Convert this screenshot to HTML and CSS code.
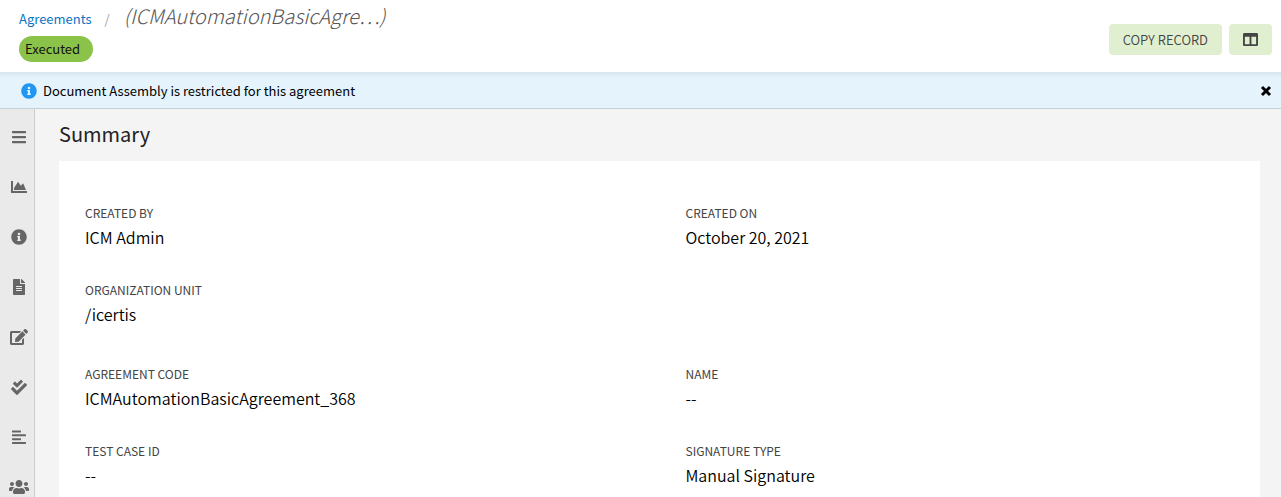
FILE: index.html
```html
<!DOCTYPE html>
<html lang="en">
<head>
    <meta charset="utf-8">
    <title>Agreement Details</title>
    <link rel="stylesheet" href="styles.css">
</head>
<body>
<header class="page-header">
    <div class="header-left">
        <nav class="breadcrumb">
            <a href="#">Agreements</a>
            <span class="separator">/</span>
            <span class="record-name">(ICMAutomationBasicAgre…)</span>
        </nav>
        <span class="status">Executed</span>
    </div>
    <div class="header-actions">
        <button type="button" class="btn">COPY RECORD</button>
        <button type="button" class="btn" aria-label="Columns">
            <svg width="15" height="15" viewBox="0 0 512 512"><path d="M464 32H48C21.500 32 0 53.500 0 80v352c0 26.500 21.500 48 48 48h416c26.500 0 48-21.500 48-48V80c0-26.500-21.500-48-48-48zM224 416H64V160h160v256zm224 0H288V160h160v256z"/></svg>
        </button>
    </div>
</header>

<div class="notice">
    <svg class="notice-icon" width="16" height="16" viewBox="0 0 512 512"><path d="M256 8C119 8 8 119 8 256s111 248 248 248 248-111 248-248S393 8 256 8zm0 110c23 0 42 19 42 42s-19 42-42 42-42-19-42-42 19-42 42-42zm56 254c0 7-5 12-12 12h-88c-7 0-12-5-12-12v-24c0-7 5-12 12-12h12v-64h-12c-7 0-12-5-12-12v-24c0-7 5-12 12-12h64c7 0 12 5 12 12v100h12c7 0 12 5 12 12v24z"/></svg>
    <span class="notice-text">Document Assembly is restricted for this agreement</span>
    <button type="button" class="notice-close" aria-label="Close">
        <svg width="12" height="12" viewBox="0 0 12 12"><path d="M2 2l8 8M10 2l-8 8"/></svg>
    </button>
</div>

<div class="layout">
    <nav class="sidebar">
        <a href="#" aria-label="Menu"><svg width="14" height="16" viewBox="0 0 448 512"><path d="M16 132h416c9 0 16-7 16-16V76c0-9-7-16-16-16H16C7 60 0 67 0 76v40c0 9 7 16 16 16zm0 160h416c9 0 16-7 16-16v-40c0-9-7-16-16-16H16c-9 0-16 7-16 16v40c0 9 7 16 16 16zm0 160h416c9 0 16-7 16-16v-40c0-9-7-16-16-16H16c-9 0-16 7-16 16v40c0 9 7 16 16 16z"/></svg></a>
        <a href="#" aria-label="Summary"><svg width="16" height="16" viewBox="0 0 512 512"><path d="M500 384c7 0 12 5 12 12v40c0 7-5 12-12 12H12c-7 0-12-5-12-12V76c0-7 5-12 12-12h40c7 0 12 5 12 12v308h436zM373 152l-61 61-75-112c-5-8-16-7-20 0L96 288v64h384l-86-197c-4-8-14-10-21-3z"/></svg></a>
        <a href="#" aria-label="Details"><svg width="16" height="16" viewBox="0 0 512 512"><path d="M256 8C119 8 8 119 8 256s111 248 248 248 248-111 248-248S393 8 256 8zm0 110c23 0 42 19 42 42s-19 42-42 42-42-19-42-42 19-42 42-42zm56 254c0 7-5 12-12 12h-88c-7 0-12-5-12-12v-24c0-7 5-12 12-12h12v-64h-12c-7 0-12-5-12-12v-24c0-7 5-12 12-12h64c7 0 12 5 12 12v100h12c7 0 12 5 12 12v24z"/></svg></a>
        <a href="#" aria-label="Document"><svg width="12" height="16" viewBox="0 0 384 512"><path d="M224 136V0H24C11 0 0 11 0 24v464c0 13 11 24 24 24h336c13 0 24-11 24-24V160H248c-13 0-24-11-24-24zm64 236c0 7-5 12-12 12H108c-7 0-12-5-12-12v-8c0-7 5-12 12-12h168c7 0 12 5 12 12v8zm0-64c0 7-5 12-12 12H108c-7 0-12-5-12-12v-8c0-7 5-12 12-12h168c7 0 12 5 12 12v8zm0-72v8c0 7-5 12-12 12H108c-7 0-12-5-12-12v-8c0-7 5-12 12-12h168c7 0 12 5 12 12zm96-114v6H256V0h6c6 0 12 3 17 7l98 98c4 5 7 11 7 17z"/></svg></a>
        <a href="#" aria-label="Edit"><svg width="18" height="16" viewBox="0 0 576 512"><path d="M403 83l90 90c4 4 4 10 0 14L275 405l-93 10c-12 2-23-9-21-21l10-93L389 83c4-4 10-4 14 0zm162-23l-49-49c-15-15-40-15-55 0l-35 35c-4 4-4 10 0 14l90 90c4 4 10 4 14 0l35-35c15-15 15-40 0-55zM384 346v102H64V128h230c3 0 6-1 9-4l40-40c7-7 2-20-9-20H48C22 64 0 86 0 112v352c0 27 22 48 48 48h352c27 0 48-21 48-48V306c0-11-13-16-20-9l-40 40c-3 3-4 6-4 9z"/></svg></a>
        <a href="#" aria-label="Tasks"><svg width="16" height="16" viewBox="0 0 512 512"><path d="M505 174.800l-39.600-39.600c-9.400-9.400-24.600-9.400-33.900 0L192 374.700 80.600 263.200c-9.400-9.400-24.600-9.400-33.900 0L7 302.900c-9.400 9.400-9.400 24.600 0 34L175 505c9.400 9.400 24.600 9.400 33.900 0l296-296.200c9.400-9.500 9.400-24.700.100-34zM180.700 268.300c6.200 6.200 16.400 6.200 22.600 0l172-172.300c6.200-6.200 6.200-16.400 0-22.600L330 28c-6.200-6.200-16.400-6.200-22.600 0L192 143.500l-55.200-55.200c-6.200-6.200-16.400-6.200-22.600 0L69 133.600c-6.200 6.200-6.200 16.400 0 22.600l111.700 112.100z"/></svg></a>
        <a href="#" aria-label="Clauses"><svg width="14" height="16" viewBox="0 0 448 512"><path d="M13 44h262c7 0 13 6 13 13v38c0 7-6 13-13 13H13c-7 0-13-6-13-13V57c0-7 6-13 13-13zM16 164h416c9 0 16 7 16 16v32c0 9-7 16-16 16H16c-9 0-16-7-16-16v-32c0-9 7-16 16-16zM13 292h262c7 0 13 6 13 13v38c0 7-6 13-13 13H13c-7 0-13-6-13-13v-38c0-7 6-13 13-13zM16 416h416c9 0 16 7 16 16v32c0 9-7 16-16 16H16c-9 0-16-7-16-16v-32c0-9 7-16 16-16z"/></svg></a>
        <a href="#" aria-label="Team"><svg width="20" height="16" viewBox="0 0 640 512"><path d="M96 224c35 0 64-29 64-64s-29-64-64-64-64 29-64 64 29 64 64 64zm448 0c35 0 64-29 64-64s-29-64-64-64-64 29-64 64 29 64 64 64zm32 32h-64c-18 0-34 7-45 18 40 22 69 62 75 110h66c18 0 32-14 32-32v-32c0-35-29-64-64-64zm-256 0c62 0 112-50 112-112S382 32 320 32 208 82 208 144s50 112 112 112zm77 32h-8c-21 10-44 16-69 16s-48-6-69-16h-8c-64 0-115 52-115 115v29c0 27 21 48 48 48h288c27 0 48-21 48-48v-29c0-63-51-115-115-115zm-224-14c-11-11-27-18-45-18H64c-35 0-64 29-64 64v32c0 18 14 32 32 32h66c6-48 35-88 75-110z"/></svg></a>
    </nav>

    <main class="content">
        <h1>Summary</h1>
        <div class="card">
            <dl class="fields">
                <div class="field"><dt>CREATED BY</dt><dd>ICM Admin</dd></div>
                <div class="field"><dt>CREATED ON</dt><dd>October 20, 2021</dd></div>
                <div class="field"><dt>ORGANIZATION UNIT</dt><dd>/icertis</dd></div>
            </dl>
            <dl class="fields">
                <div class="field"><dt>AGREEMENT CODE</dt><dd>ICMAutomationBasicAgreement_368</dd></div>
                <div class="field"><dt>NAME</dt><dd>--</dd></div>
                <div class="field"><dt>TEST CASE ID</dt><dd>--</dd></div>
                <div class="field"><dt>SIGNATURE TYPE</dt><dd>Manual Signature</dd></div>
            </dl>
        </div>
    </main>
</div>
</body>
</html>
```
FILE: styles.css
```css
* {
    box-sizing: border-box;
}

html, body {
    height: 100%;
}

body {
    display: flex;
    flex-direction: column;
    margin: 0;
    overflow: hidden;
    background-color: #f4f4f4;
    color: #000;
    font-family: "Noto Sans CJK SC", "Noto Sans", sans-serif;
    font-size: 16px;
    font-weight: 350;
    line-height: 24px;
}

svg {
    display: block;
    fill: currentColor;
}

.page-header {
    display: flex;
    justify-content: space-between;
    align-items: flex-start;
    padding: 4px 9px 10px 19px;
    background-color: #fff;
}

.breadcrumb {
    display: flex;
    align-items: baseline;
    height: 32px;
    font-size: 13px;
}

.breadcrumb a {
    color: #0b74c4;
    font-weight: 400;
    text-decoration: none;
}

.separator {
    margin: 0 14px 0 13px;
    color: #999;
}

.record-name {
    color: #555;
    font-size: 20px;
    font-style: italic;
    font-weight: 300;
}

.status {
    display: block;
    width: fit-content;
    padding: 0 13px 0 6px;
    border-radius: 13px;
    background-color: #8bc34a;
    color: #111;
    font-size: 13px;
    font-weight: 400;
    line-height: 26px;
}

.header-actions {
    display: flex;
    gap: 7px;
    padding-top: 20px;
}

.btn {
    height: 31px;
    padding: 0 14px;
    border: 0;
    border-radius: 4px;
    background-color: #e1efd1;
    color: #444;
    font-family: inherit;
    font-size: 13px;
    font-weight: 350;
}

.notice {
    display: flex;
    align-items: center;
    height: 37px;
    flex-shrink: 0;
    padding: 2px 9px 0 21px;
    border-bottom: 1px solid #c3d0da;
    background: linear-gradient(#d7e6ef, #e5f4fc 6px);
    font-size: 13px;
    font-weight: 400;
}

.notice-icon {
    color: #2196f3;
}

.notice-text {
    flex: 1;
    margin-left: 6px;
}

.notice-close {
    padding: 0;
    border: 0;
    background: none;
}

.notice-close path {
    stroke: #000;
    stroke-width: 3;
}

.layout {
    display: flex;
    flex: 1;
    min-height: 0;
}

.sidebar {
    width: 35px;
    flex-shrink: 0;
    padding-top: 3px;
    overflow: hidden;
    border-right: 1px solid #ccc;
    background-color: #eaeaea;
}

.sidebar a {
    display: flex;
    align-items: center;
    justify-content: center;
    height: 50px;
    padding-left: 3px;
    color: #666;
}

.content {
    flex: 1;
    padding: 9px 21px 0 24px;
}

h1 {
    margin: 0 0 11px;
    color: #222;
    font-size: 20px;
    font-weight: 400;
    line-height: 32px;
}

.card {
    padding-top: 41px;
    background-color: #fff;
}

.fields {
    display: grid;
    grid-template-columns: 1fr 1fr;
    margin: 0 0 7px;
}

.field {
    height: 77px;
    padding-left: 26px;
}

dt {
    color: #444;
    font-size: 12px;
    font-weight: 400;
    line-height: 22px;
}

dd {
    margin: 0;
    line-height: 26px;
}
```
